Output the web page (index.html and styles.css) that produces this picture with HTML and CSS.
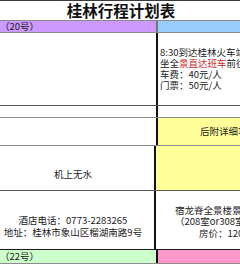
FILE: index.html
```html
<!DOCTYPE html>
<html lang="zh-CN">
<head>
<meta charset="utf-8">
<title>桂林行程计划表</title>
<link rel="stylesheet" href="styles.css">
</head>
<body>
<div class="sheet">
  <div class="title-row">桂林行程计划表</div>

  <div class="row row-first line-gray">
    <div class="cell-l purple date-cell border-gray">（20号）</div>
    <div class="cell-r blue"></div>
  </div>

  <div class="row row-plan line-dark">
    <div class="cell-l"></div>
    <div class="cell-r plan">
      <div>8:30到达桂林火车站</div>
      <div>坐全<span class="red">景直达班车</span>前往龙脊</div>
      <div>车费：40元/人</div>
      <div>门票：50元/人</div>
    </div>
  </div>

  <div class="row row-thin line-gray">
    <div class="cell-l"></div>
    <div class="cell-r"></div>
  </div>

  <div class="row row-note line-gray">
    <div class="cell-l"></div>
    <div class="cell-r yellow note">后附详细攻略</div>
  </div>

  <div class="row row-water line-dark">
    <div class="cell-l centered water">机上无水</div>
    <div class="cell-r yellow"></div>
  </div>

  <div class="row row-hotel line-black">
    <div class="cell-l centered hotel">
      <div>酒店电话：0773-2283265</div>
      <div>地址：桂林市象山区榴湖南路9号</div>
    </div>
    <div class="cell-r stay">
      <div class="stay-1">宿龙脊全景楼景观房</div>
      <div class="stay-2">（208室or308室）</div>
      <div class="stay-3">房价：120元/晚</div>
    </div>
  </div>

  <div class="row row-last line-gray">
    <div class="cell-l green date-cell">（22号）</div>
    <div class="cell-r pink"></div>
  </div>
</div>
</body>
</html>
```

FILE: styles.css
```css
html, body {
  margin: 0;
  padding: 0;
  background: #ffffff;
}

body {
  width: 240px;
  height: 274px;
  overflow: hidden;
  font-family: "Noto Sans CJK SC", "Liberation Sans", sans-serif;
  font-size: 9.5px;
  color: #222222;
}

.sheet {
  border-top: 1px solid #3a3a3a;
  width: 240px;
}

.title-row {
  height: 19px;
  line-height: 19px;
  border-bottom: 1px solid #8a8a8a;
  text-align: center;
  padding-left: 2px;
  font-size: 15.5px;
  font-weight: bold;
  color: #111111;
  white-space: nowrap;
}

.row {
  display: flex;
  white-space: nowrap;
}

.line-gray { border-bottom: 1px solid #8c8c8c; }
.line-dark { border-bottom: 1px solid #555555; }
.line-black { border-bottom: 1px solid #1a1a1a; }

.cell-l {
  width: 156px;
  flex: none;
  border-right: 2px solid #111111;
  overflow: hidden;
}

.cell-l.border-gray { border-right-color: #777777; }

.cell-r {
  flex: 1;
  min-width: 0;
  overflow: hidden;
}

.purple { background: #cc99ff; }
.blue { background: #99ccff; }
.yellow { background: #ffff99; }
.green { background: #ccffcc; }
.pink { background: #ff99cc; }

.red { color: #cc2a2a; }

.row-first { height: 11px; }
.row-plan { height: 72px; }
.row-thin { height: 11px; }
.row-note { height: 27px; }
.row-water { height: 44px; }
.row-hotel { height: 58px; }
.row-last { height: 13px; }

.date-cell {
  line-height: 11px;
}

.row-last .date-cell { line-height: 13px; }

.plan {
  padding: 13.5px 0 0 2px;
  line-height: 11px;
}

.note {
  line-height: 27px;
  padding-left: 42px;
}

.centered {
  text-align: center;
  padding-right: 8px;
  box-sizing: border-box;
}

.water {
  padding-top: 22px;
  line-height: 12px;
}

.hotel {
  display: flex;
  flex-direction: column;
  justify-content: flex-end;
  padding-bottom: 11px;
  line-height: 11.5px;
}

.stay {
  display: flex;
  flex-direction: column;
  justify-content: flex-end;
  padding-bottom: 10px;
  line-height: 11.5px;
}

.stay-1 { padding-left: 19px; }
.stay-2 { padding-left: 19px; }
.stay-3 { padding-left: 43px; }
```
